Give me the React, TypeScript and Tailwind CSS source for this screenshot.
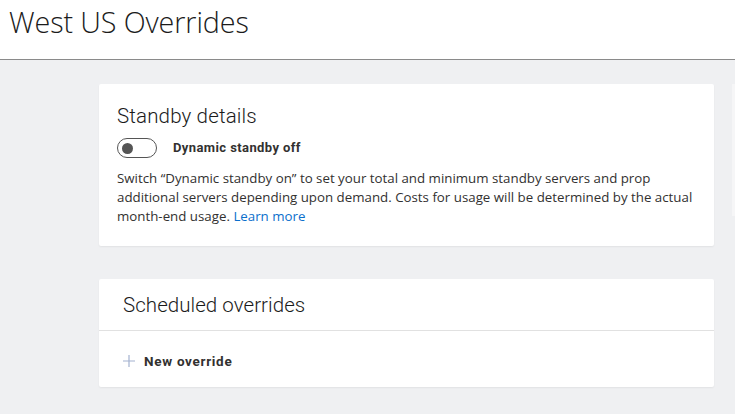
import React from "react";

export default function App() {
  return (
    <div className="w-[735px] h-[414px] overflow-hidden bg-[#eff0f2] text-[#323130]" style={{ fontFamily: '"Open Sans", sans-serif' }}>
      <div className="h-[60px] bg-white border-b border-[#8a8a8a] flex items-start pl-[9px] pt-[3px]">
        <h1 className="text-[28.7px] font-light leading-[38px] tracking-[-0.1px] text-[#1b1b1b]">West US Overrides</h1>
      </div>
      <div className="flex pl-[99px] pt-[24px]">
        <div className="w-[615px] flex flex-col gap-[33px]">
          <div className="bg-white rounded-[2px] shadow-[0_1px_2px_rgba(0,0,0,0.06)] h-[162px] pl-[18px] pr-[14px] pt-[19px]">
            <h2 className="text-[20.5px] font-light leading-[26px] tracking-[0.15px] text-[#1b1b1b]" style={{ fontFamily: 'Roboto, sans-serif' }}>Standby details</h2>
            <div className="flex items-center mt-[9px] h-[20px]">
              <div className="w-[40px] h-[20px] rounded-full border border-[#555] flex items-center pl-[4px]">
                <div className="w-[11px] h-[11px] rounded-full bg-[#555]" />
              </div>
              <span className="ml-[16px] text-[13px] font-bold tracking-[0.4px] text-[#323130]" style={{ fontFamily: 'Roboto, sans-serif' }}>Dynamic standby off</span>
            </div>
            <p className="mt-[11px] text-[13.3px] leading-[19px] text-[#323130]">
              Switch “Dynamic standby on” to set your total and minimum standby servers and prop additional servers depending upon demand. Costs for usage will be determined by the actual month-end usage. <span className="text-[#0b6fcc]">Learn more</span>
            </p>
          </div>
          <div className="bg-white rounded-[2px] shadow-[0_1px_2px_rgba(0,0,0,0.06)] h-[108px] flex flex-col">
            <div className="h-[52px] border-b border-[#e1e1e1] pl-[24px] flex items-center pt-[2px]">
              <h2 className="text-[20.5px] font-light tracking-[0.05px] text-[#1b1b1b]" style={{ fontFamily: 'Roboto, sans-serif' }}>Scheduled overrides</h2>
            </div>
            <div className="flex items-center pl-[24px] h-[55px] pt-[5px]">
              <svg width="12" height="12" viewBox="0 0 12 12" className="mr-[9px]">
                <path d="M6 0V12M0 6H12" stroke="#a4b2d0" strokeWidth="1.2" />
              </svg>
              <span className="text-[13.5px] font-bold tracking-[0.7px] text-[#323130]" style={{ fontFamily: 'Roboto, sans-serif' }}>New override</span>
            </div>
          </div>
        </div>
        <div className="ml-[18px] w-[3px] h-[132px] bg-[#f6f6f7]" />
      </div>
    </div>
  );
}
